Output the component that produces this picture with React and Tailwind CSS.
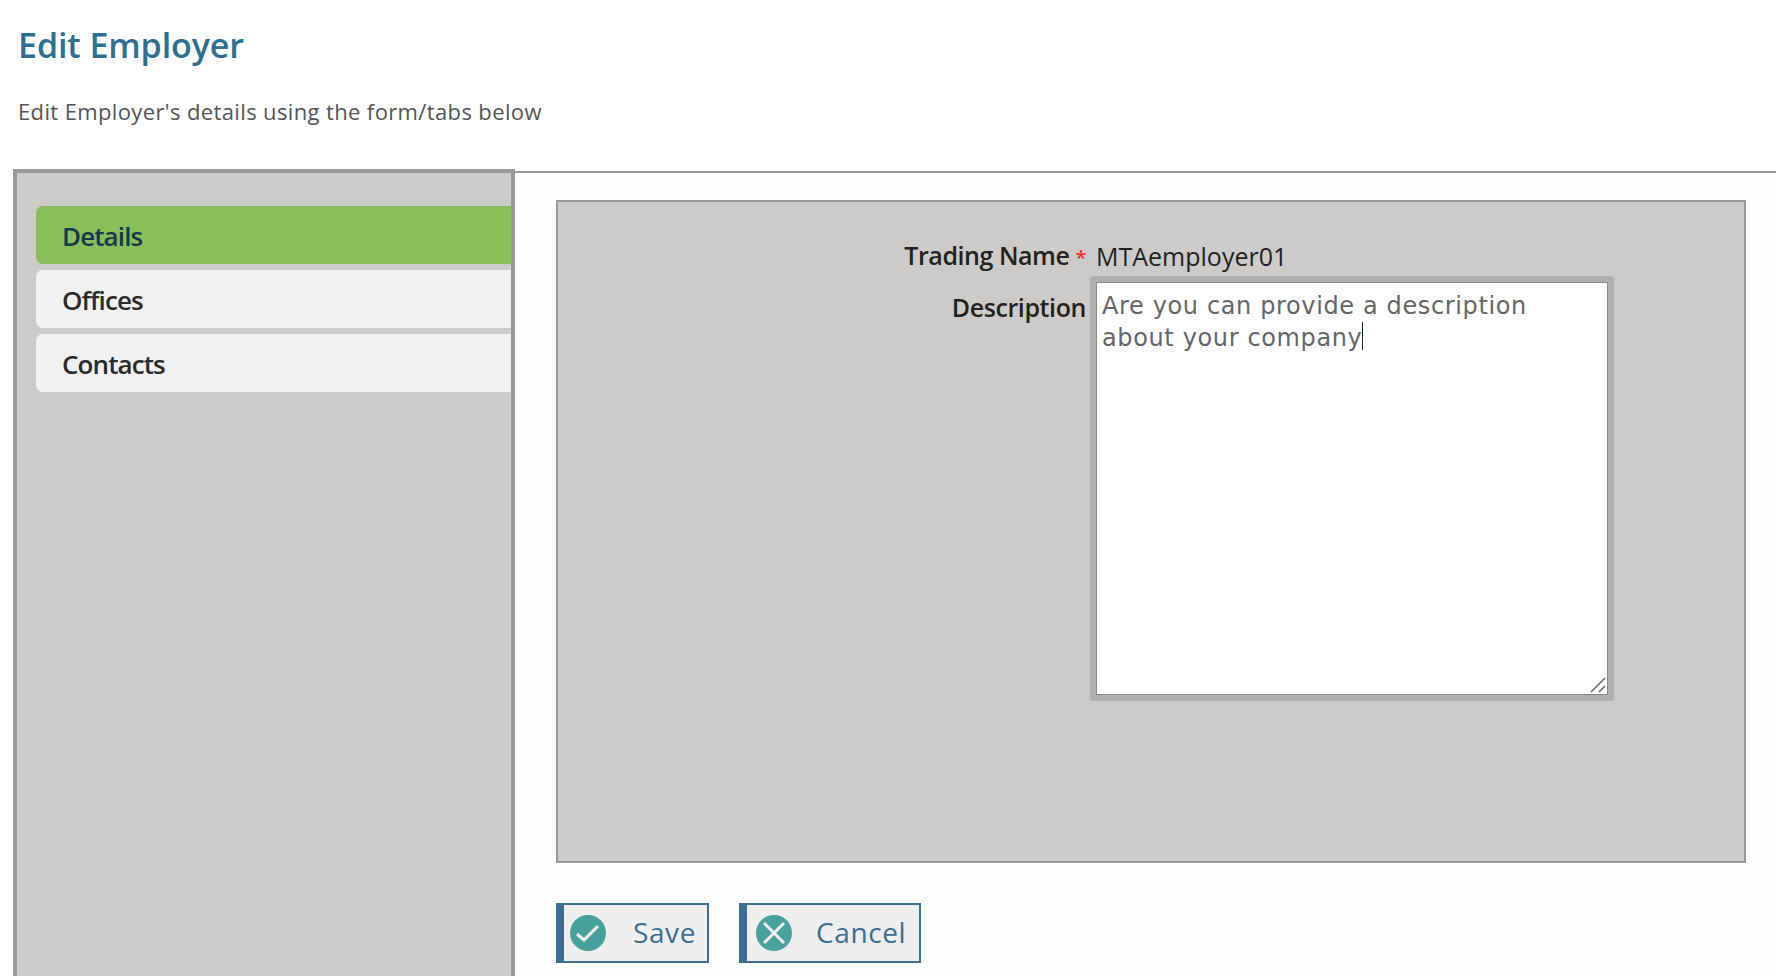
import React from 'react';

const BODY_FONT = "font-['Open_Sans','Noto_Sans',sans-serif]";

const TABS = [
  { label: 'Details', active: true },
  { label: 'Offices' },
  { label: 'Contacts' },
];

function ActionButton({ label, icon, className }) {
  return (
    <button className={`flex h-[60px] items-center bg-[#efefef] border-2 border-l-8 border-[#3b6e8f] text-[#3b6e8f] text-[28px] ${className}`}>
      {icon}
      <span className="tracking-[0.6px] mb-[2px]">{label}</span>
    </button>
  );
}

export default function App() {
  return (
    <div className={`h-screen overflow-hidden bg-white flex flex-col ${BODY_FONT}`}>
      {/* Header */}
      <div className="h-[169px] shrink-0 pl-[18px] pt-[22px]">
        <h1 className="text-[34px] leading-[46px] font-semibold text-[#2d6f92] tracking-[-0.1px]">Edit Employer</h1>
        <p className="mt-[28px] text-[22px] leading-[30px] text-[#555555] tracking-[0.37px]">Edit Employer's details using the form/tabs below</p>
      </div>

      <div className="flex flex-1 min-h-0">
        {/* Tabs */}
        <div className="ml-[13px] w-[502px] shrink-0 bg-[#cccbc9] border-4 border-b-0 border-[#999999] pt-[33px] pl-[19px] flex flex-col gap-[6px]">
          {TABS.map((tab) => (
            <div
              key={tab.label}
              className={`h-[58px] flex items-center pl-[26px] pt-[2px] rounded-l-[7px] text-[26px] font-semibold tracking-[-0.9px] ${
                tab.active ? 'bg-[#88bf5a] text-[#17384a]' : 'bg-[#f1f1f1] text-[#2b2b2b]'
              }`}
            >
              {tab.label}
            </div>
          ))}
        </div>

        {/* Form side */}
        <div className="flex-1 mt-[2px] border-t-2 border-[#999999] bg-[#fdfefe] pl-[41px] pr-[30px] pt-[27px]">
          <div className="h-[663px] bg-[#cccbc9] border-2 border-[#999999] pt-[36px] flex flex-col">
            <div className="flex items-center h-[38px]">
              <div className="w-[528px] mb-[2px] text-right text-[25px] font-semibold text-[#222222] tracking-[-0.45px]">
                Trading Name <span className="text-[#e3342f] text-[20px]">*</span>
              </div>
              <div className="ml-[10px] text-[25px] text-[#222222] tracking-[0px]">MTAemployer01</div>
            </div>
            <div className="flex">
              <div className="w-[528px] text-right text-[25px] font-semibold text-[#222222] tracking-[-0.4px] pt-[13px]">Description</div>
              <div className="relative ml-[4px] w-[524px] h-[425px] border-[6px] border-[#b0b0b2] rounded-[4px] bg-white">
                <textarea
                  readOnly
                  defaultValue="Are you can provide a description about your company"
                  className="block w-full h-full resize-none bg-white border border-[#8a8a8a] pl-[5px] pr-[40px] py-[7px] text-[24px] leading-[32px] text-[#666666] font-['DejaVu_Sans',sans-serif] tracking-[0.63px] outline-none"
                />
                <span className="absolute left-[266px] top-[40px] h-[28px] w-[1px] bg-[#222222]" />
                <svg width="16" height="16" viewBox="0 0 16 16" className="absolute right-[2px] bottom-[2px]">
                  <path d="M1 15L15 1M9 15l6-6" fill="none" stroke="#6f6f6f" strokeWidth="1.6" />
                </svg>
              </div>
            </div>
          </div>

          <div className="flex gap-[30px] mt-[40px]">
            <ActionButton
              label="Save"
              className="w-[153px]"
              icon={
                <svg width="38" height="38" viewBox="0 0 38 38" className="ml-[5px] mr-[26px] shrink-0">
                  <circle cx="19" cy="19" r="18" fill="#48a19b" />
                  <path d="M8 20l7 6L29 12" fill="none" stroke="#f0f0f0" strokeWidth="3" />
                </svg>
              }
            />
            <ActionButton
              label="Cancel"
              className="w-[182px]"
              icon={
                <svg width="38" height="38" viewBox="0 0 38 38" className="ml-[8px] mr-[23px] shrink-0">
                  <circle cx="19" cy="19" r="18" fill="#48a19b" />
                  <path d="M9 9l20 20M29 9L9 29" fill="none" stroke="#f0f0f0" strokeWidth="3" />
                </svg>
              }
            />
          </div>
        </div>
      </div>
    </div>
  );
}
